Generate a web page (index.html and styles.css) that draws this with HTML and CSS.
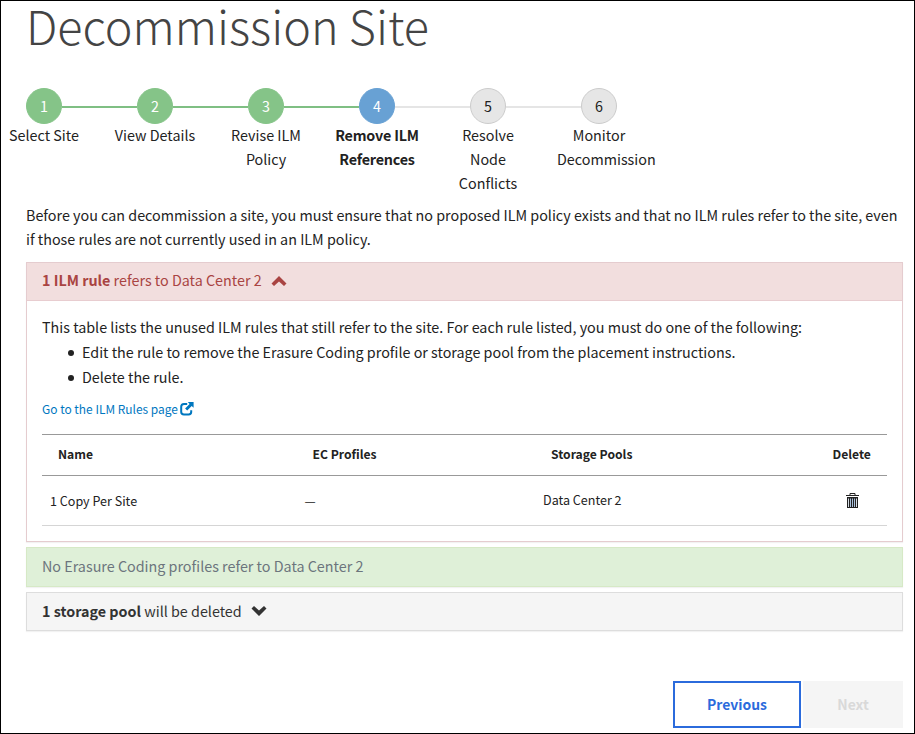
FILE: index.html
```
<!DOCTYPE html>
<html lang="en">
<head>
<meta charset="utf-8">
<title>Decommission Site</title>
<link rel="stylesheet" href="styles.css">
</head>
<body>
<main class="page">
  <h1 class="title">Decommission Site</h1>
  <ol class="steps">
    <li class="step done"><span class="num">1</span><span class="label">Select Site</span></li>
    <li class="step done"><span class="num">2</span><span class="label">View Details</span></li>
    <li class="step done"><span class="num">3</span><span class="label">Revise ILM<br>Policy</span></li>
    <li class="step current"><span class="num">4</span><span class="label">Remove ILM<br>References</span></li>
    <li class="step"><span class="num">5</span><span class="label">Resolve<br>Node<br>Conflicts</span></li>
    <li class="step"><span class="num">6</span><span class="label">Monitor<br>Decommission</span></li>
  </ol>
  <p class="intro">Before you can decommission a site, you must ensure that no proposed ILM policy exists and that no ILM rules refer to the site, even<br>if those rules are not currently used in an ILM policy.</p>

  <section class="panel danger">
    <h2 class="heading"><span class="heading-text"><b>1 ILM rule</b> refers to Data Center 2</span>
      <svg class="chevron" viewBox="0 0 16 10"><path d="M8 0 15.5 7.4 13 10 8 5.5 3 10 .5 7.4Z"/></svg>
    </h2>
    <div class="body">
      <p class="text">This table lists the unused ILM rules that still refer to the site. For each rule listed, you must do one of the following:</p>
      <ul class="options">
        <li>Edit the rule to remove the Erasure Coding profile or storage pool from the placement instructions.</li>
        <li>Delete the rule.</li>
      </ul>
      <a class="link" href="#"><span>Go to the ILM Rules page</span>
        <svg class="external" viewBox="0 0 14 14"><path d="M7.2 2H4Q1.2 2 1.2 4.8V10Q1.2 12.4 4 12.4H8.6Q11.2 12.4 11.2 10V8.3" fill="none" stroke="currentColor" stroke-width="2"/><path d="M7.8 0H13.6V5.8L11.7 4 7.2 8.5 5.1 6.4 9.6 1.9Z" fill="currentColor"/></svg>
      </a>
      <table class="rules">
        <thead><tr><th class="c-name">Name</th><th class="c-ec">EC Profiles</th><th class="c-pool">Storage Pools</th><th class="c-del">Delete</th></tr></thead>
        <tbody><tr><td>1 Copy Per Site</td><td>—</td><td class="pool">Data Center 2</td><td class="trash-cell"><svg class="trash" viewBox="0 0 14 15"><path d="M4 2V.5H9V2M0 2.5H13" fill="none" stroke="currentColor"/><path d="M1 4H12V15H1Z" fill="currentColor"/><path d="M2.5 5.5V14M10.5 5.5V14" stroke="#d5dce4"/><path d="M4.5 5.5V14M6.5 5.5V14M8.5 5.5V14" stroke="#a9c0dc"/></svg></td></tr></tbody>
      </table>
    </div>
  </section>
  <section class="panel success"><h2 class="heading"><span class="heading-text">No Erasure Coding profiles refer to Data Center 2</span></h2></section>
  <section class="panel neutral"><h2 class="heading"><span class="heading-text"><b>1 storage pool</b> will be deleted</span>
    <svg class="chevron down" viewBox="0 0 16 10"><path d="M8 0 15.5 7.4 13 10 8 5.5 3 10 .5 7.4Z"/></svg></h2></section>
  <footer class="actions">
    <button class="btn previous">Previous</button>
    <button class="btn next" disabled>Next</button>
  </footer>
</main>
</body>
</html>
```
FILE: styles.css
```
* { box-sizing: border-box; }
body { margin: 0; font: 14.33px/24px "Noto Sans CJK SC", "Noto Sans", sans-serif; color: #222; background: #fff; }
h1, h2, p, ul, ol { margin: 0; padding: 0; font-weight: 400; }
.page { width: 915px; height: 734px; border: 1px solid #000; padding: 0 11px 0 25px; }
.title { font-size: 46.7px; font-weight: 200; line-height: 48px; height: 87px; color: #444; white-space: nowrap; }
.steps { display: flex; list-style: none; margin-left: -37.5px; height: 115px; }
.step { position: relative; width: 111px; flex: none; display: flex; flex-direction: column; align-items: center; text-align: center; }
.num { width: 36px; height: 36px; line-height: 34px; border: 1px solid #ccc; border-radius: 50%; background: #e6e6e6; }
.label { width: 84px; margin-top: -1px; white-space: nowrap; }
.step + .step::before { content: ""; position: absolute; top: 18px; left: -37.5px; width: 75px; height: 2px; background: #e5e5e5; }
.done .num { background: #85c488; border-color: #85c488; color: #fff; }
.current .num { background: #68a1d4; border-color: #68a1d4; color: #fff; }
.current .label { font-weight: 700; letter-spacing: -.2px; }
.step.done + .step::before, .step.current::before { background: #7fbf83; }
.intro { height: 59px; white-space: nowrap; }
.panel { border: 1px solid #ddd; box-shadow: 0 1px 1px rgba(0,0,0,.05); margin-bottom: 5px; }
.heading { display: flex; align-items: center; gap: 9px; height: 37px; padding: 0 15px; font-size: 14.33px; }
.heading-text { padding-bottom: 2px; }
.chevron { width: 16px; height: 10px; margin-top: -1px; fill: currentColor; }
.down { transform: rotate(180deg); }
.danger { border-color: #e5cccf; height: 280px; }
.danger .heading { height: 38px; background: #f2dede; color: #a94442; border-bottom: 1px solid #e8cdd0; }
.danger .heading-text { padding-bottom: 3px; }
.success { background: #dff0d8; border-color: #d6e9c6; color: #6c757d; height: 40px; }
.neutral { background: #f5f5f5; color: #333; height: 39px; }
.body { padding: 14px 15px 0; }
.text { height: 24px; white-space: nowrap; }
.options { padding-left: 26px; line-height: 25px; white-space: nowrap; list-style: none; }
.options li { display: flex; align-items: center; gap: 8px; }
.options li::before { content: ""; width: 6px; height: 6px; border-radius: 50%; background: #222; margin-top: 2px; }
.link { display: flex; align-items: center; gap: 2px; height: 20px; margin-top: 10px; color: #0077bf; font-size: 11.95px; text-decoration: none; }
.external { width: 14px; height: 14px; }
.rules { width: 845px; margin-top: 15px; border-collapse: collapse; table-layout: fixed; font-size: 12.55px; line-height: 20px; }
.rules th { height: 41px; padding: 0 16px 2px; font-size: 12.15px; text-align: left; font-weight: 700; border-top: 1px solid #999; border-bottom: 1px solid #999; }
.rules td { height: 50px; padding: 1px 8px 0; border-bottom: 1px solid #d5d5d5; }
.rules .pool { padding: 0 8px 1px; }
.c-name { width: 254.5px; }
.c-ec { width: 238.5px; }
.c-pool { width: 281.5px; }
.rules .trash-cell { padding: 0 0 0 29px; }
.trash { display: block; width: 14px; height: 15px; }
.actions { display: flex; justify-content: flex-end; gap: 2px; margin-top: 50px; }
.btn { height: 47px; border: 0; padding: 0 0 2px; font: 700 13.9px/24px "Noto Sans CJK SC", sans-serif; }
.previous { width: 128px; border: 2px solid #2b6bdc; background: #fff; color: #2b6bdc; }
.next { width: 100px; background: #f5f5f5; color: #d9d9d9; }
```
